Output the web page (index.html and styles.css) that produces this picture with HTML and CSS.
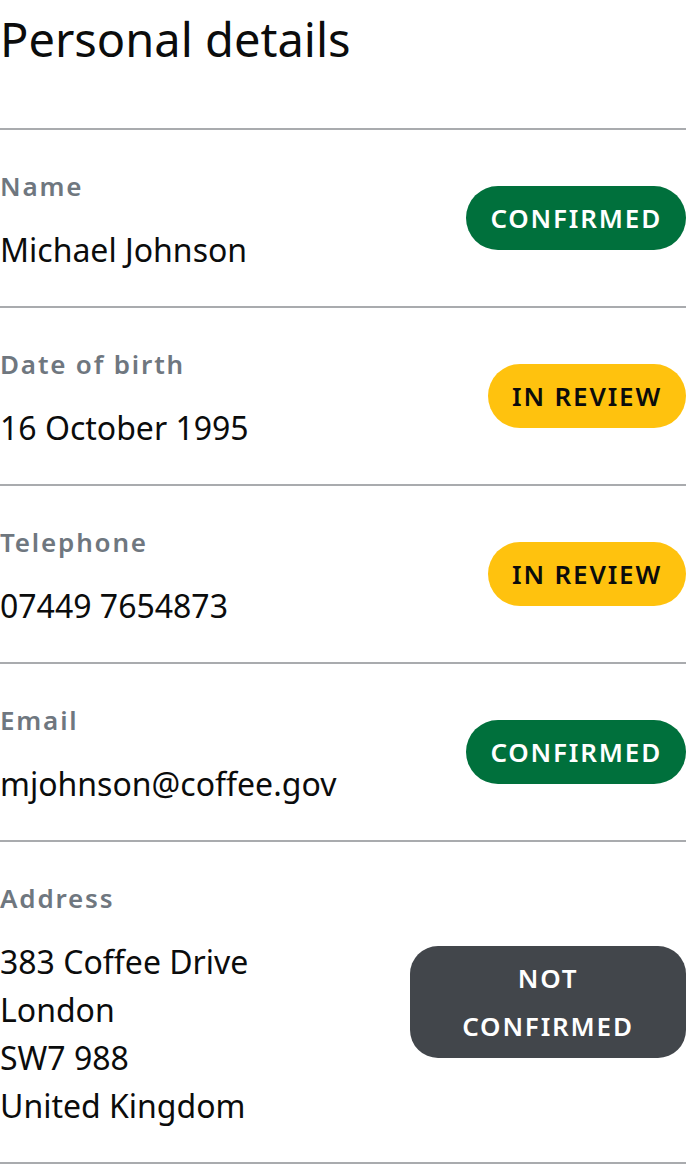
FILE: index.html
```html
<!DOCTYPE html>
<html lang="en">
<head>
<meta charset="utf-8">
<title>Personal details</title>
<link rel="stylesheet" href="styles.css">
</head>
<body>
<main class="page">
  <h1 class="title">Personal details</h1>
  <dl class="details">
    <div class="row">
      <div class="field">
        <dt class="label">Name</dt>
        <dd class="value">Michael Johnson</dd>
      </div>
      <span class="badge badge-confirmed">CONFIRMED</span>
    </div>
    <div class="row">
      <div class="field">
        <dt class="label">Date of birth</dt>
        <dd class="value">16 October 1995</dd>
      </div>
      <span class="badge badge-review">IN REVIEW</span>
    </div>
    <div class="row">
      <div class="field">
        <dt class="label">Telephone</dt>
        <dd class="value">07449 7654873</dd>
      </div>
      <span class="badge badge-review">IN REVIEW</span>
    </div>
    <div class="row">
      <div class="field">
        <dt class="label">Email</dt>
        <dd class="value">mjohnson@coffee.gov</dd>
      </div>
      <span class="badge badge-confirmed">CONFIRMED</span>
    </div>
    <div class="row">
      <div class="field">
        <dt class="label">Address</dt>
        <dd class="value">383 Coffee Drive<br>London<br>SW7 988<br>United Kingdom</dd>
      </div>
      <span class="badge badge-none">NOT CONFIRMED</span>
    </div>
  </dl>
</main>
</body>
</html>
```

FILE: styles.css
```css
html, body {
  margin: 0;
  padding: 0;
  background: #ffffff;
}

body {
  font-family: "Noto Sans", "Open Sans", sans-serif;
  color: #0b0c0c;
}

.page {
  width: 686px;
}

.title {
  margin: 0 0 50px 0;
  font-size: 47px;
  line-height: 78px;
  font-weight: 400;
  color: #0b0c0c;
}

.details {
  margin: 0;
  border-top: 2px solid #a9abae;
}

.row {
  display: flex;
  align-items: center;
  justify-content: space-between;
  padding: 32px 0;
  border-bottom: 2px solid #a9abae;
}

.field {
  display: flex;
  flex-direction: column;
  gap: 16px;
}

.label {
  margin: 0;
  font-size: 26px;
  line-height: 48px;
  font-weight: 600;
  letter-spacing: 0.07em;
  color: #6f777f;
}

.value {
  margin: 0;
  font-size: 32px;
  line-height: 48px;
  color: #0b0c0c;
}

.badge {
  box-sizing: border-box;
  max-width: 276px;
  padding: 8px 24px;
  border-radius: 32px;
  font-size: 26px;
  line-height: 48px;
  font-weight: 600;
  letter-spacing: 0.07em;
  text-align: center;
}

.badge-confirmed {
  background: #00703c;
  color: #ffffff;
}

.badge-review {
  background: #ffc20e;
  color: #0b0c0c;
}

.badge-none {
  background: #42464b;
  color: #ffffff;
  border-radius: 28px;
}
```
